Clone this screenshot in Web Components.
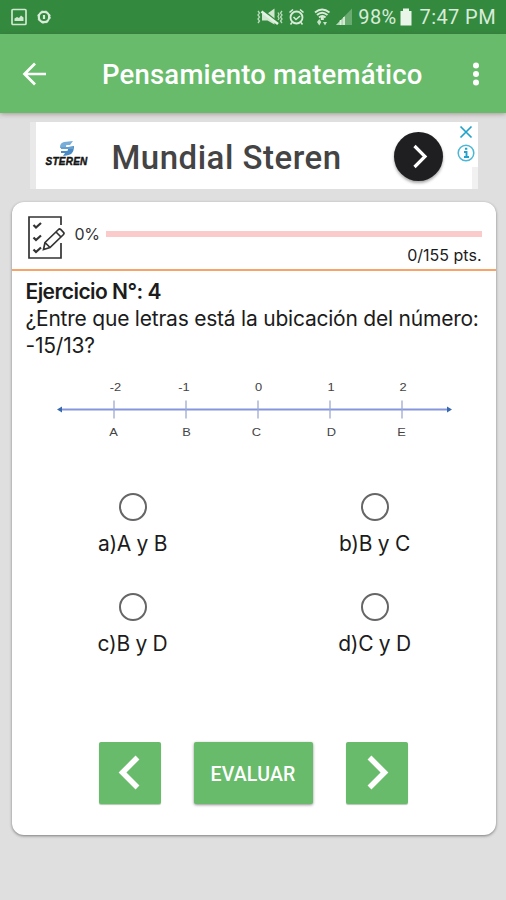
<!DOCTYPE html>
<html lang="es">
<head>
<meta charset="utf-8">
<meta name="viewport" content="width=device-width, initial-scale=1">
<title>Pensamiento matemático</title>
<style>
  html, body { margin: 0; height: 100%; }
  body {
    --green: #67bb6a;
    --green-dark: #338a3e;
    background: #dfdfdf;
    font-family: Inter, "Liberation Sans", sans-serif;
    color: #1c1c1c;
    overflow: hidden;
  }
</style>
</head>
<body>
<quiz-app>
  <status-bar slot="top" battery="98%" time="7:47 PM"></status-bar>
  <app-bar slot="top">Pensamiento matemático</app-bar>
  <ad-banner brand="STEREN">Mundial Steren</ad-banner>
  <quiz-card>
    <quiz-progress slot="header" percent="0" points="0/155 pts."></quiz-progress>
    <quiz-question heading="Ejercicio N°: 4">¿Entre que letras está la ubicación del número: -15/13?</quiz-question>
    <number-line></number-line>
    <answer-grid>
      <answer-option>a)A y B</answer-option>
      <answer-option>b)B y C</answer-option>
      <answer-option>c)B y D</answer-option>
      <answer-option>d)C y D</answer-option>
    </answer-grid>
    <quiz-button slot="actions" flat><svg width="62" height="62" viewBox="0 0 62 62"><path d="M38.500 15.500 23.500 30.500 38.500 45.500" fill="none" stroke="#fff" stroke-width="5.500"/></svg></quiz-button>
    <quiz-button slot="actions" wide>EVALUAR</quiz-button>
    <quiz-button slot="actions" flat><svg width="62" height="62" viewBox="0 0 62 62"><path d="M23.500 15.500 38.500 30.500 23.500 45.500" fill="none" stroke="#fff" stroke-width="5.500"/></svg></quiz-button>
  </quiz-card>
</quiz-app>

<script>
// screen layout: bars on top, content column below
class QuizApp extends HTMLElement {
  constructor() {
    super();
    this.attachShadow({ mode: 'open' });
    this.shadowRoot.innerHTML = `
      <style>
        :host { display: flex; flex-direction: column; height: 900px; width: 506px; }
        main { display: flex; flex-direction: column; align-items: center; gap: 13px; padding-top: 9px; }
      </style>
      <slot name="top"></slot>
      <main><slot></slot></main>
    `;
  }
}
customElements.define('quiz-app', QuizApp);

/*
android status bar
 - attributes: battery, time
 */
class StatusBar extends HTMLElement {
  constructor() {
    super();
    this.attachShadow({ mode: 'open' });
    this.shadowRoot.innerHTML = `
      <style>
        :host {
          display: flex;
          align-items: center;
          justify-content: space-between;
          box-sizing: border-box;
          height: 34px;
          padding: 0 10px 0 11px;
          background: var(--green-dark);
          color: #d9ecd9;
          font: 20px/36px Roboto, sans-serif;
        }
        div { display: flex; align-items: center; white-space: nowrap; }
        svg { display: block; flex: none; }
        .left { gap: 10px; }
        .battery { margin-left: 5px; letter-spacing: 0.4px; }
        .time { margin-left: 8px; letter-spacing: 0.4px; }
        .cell { margin-left: 3px; }
      </style>
      <div class="left">
        <svg width="16" height="18" viewBox="0 0 16 18"><rect x="1" y="1.500" width="14" height="15" rx="1" fill="none" stroke="#cfe8cf" stroke-width="1.700"/><path d="M3.500 13V10.500L6 9l2 1 2-2.500 2.500 2V13z" fill="#cfe8cf"/></svg>
        <svg width="16" height="18" viewBox="0 0 16 18"><circle cx="7" cy="9" r="5.200" fill="none" stroke="#d9ecd9" stroke-width="2.200"/><circle cx="7" cy="9" r="6.200" fill="none" stroke="#d9ecd9" stroke-width="1" stroke-dasharray="2 3"/><path d="M7 7v4" stroke="#d9ecd9" stroke-width="2.200"/></svg>
      </div>
      <div>
        <svg width="26" height="18" viewBox="0 0 26 18"><path d="M5 5.500H10.500l7-5v16L10.500 12.500H5z" fill="#cfe6cf"/><path d="M5.500 2 20.500 14" stroke="#338a3e" stroke-width="2"/><path d="M4.500 3.500 21 16" stroke="#e4f2e4" stroke-width="2.600"/><path d="M1 3l1.500 2L1 7l1.500 2L1 11l1.500 2L1 15M25 3l-1.500 2L25 7l-1.500 2L25 11l-1.500 2L25 15M21 4.500l1 2-1 2 1 2-1 1.500" fill="none" stroke="#b9dab9" stroke-width="1.300"/></svg>
        <svg width="17" height="18" viewBox="0 0 17 18" style="margin-left:5px"><circle cx="8.500" cy="9.500" r="6" fill="none" stroke="#d9ecd9" stroke-width="1.800"/><path d="M1.500 4.500 5 1.500M15.500 4.500 12 1.500M4 14.500 2.500 16.500M13 14.500l1.500 2M5.500 9l2.500 2.500 4-3.500" fill="none" stroke="#d9ecd9" stroke-width="1.600"/></svg>
        <svg width="17" height="18" viewBox="0 0 17 18" style="margin-left:9px"><path d="M1 4.500Q8 -1.500 15.500 4.500M3 7Q8 2.500 13.500 7M5 9.500Q8.500 6.500 11.500 9.500" fill="none" stroke="#d9ecd9" stroke-width="1.900"/><path d="M8.300 9v3" stroke="#d9ecd9" stroke-width="3"/><path d="m3 14 2.300-3 2 3-2 3.500zM9 14h4l-2 3.500z" fill="#c6e2c6"/></svg>
        <svg width="18" height="18" viewBox="0 0 18 18" style="margin-left:4px"><path d="M17 .5V17H1z" fill="#69ab70"/><path d="M10 8v9H1z" fill="#b5d7b7"/><path d="M5.500 12v5M9 9v8" stroke="#deefde" stroke-width="1.500"/></svg>
        <span class="battery"></span>
        <svg class="cell" width="12" height="18" viewBox="0 0 12 18"><path d="M3 .5h6V3h2.500v14.500H.5V3H3z" fill="#e9f5e9"/></svg>
        <span class="time"></span>
      </div>
    `;
    this.shadowRoot.querySelector('.battery').textContent = this.getAttribute('battery');
    this.shadowRoot.querySelector('.time').textContent = this.getAttribute('time');
  }
}
customElements.define('status-bar', StatusBar);

// toolbar with back arrow, title and overflow menu
class AppBar extends HTMLElement {
  constructor() {
    super();
    this.attachShadow({ mode: 'open' });
    this.shadowRoot.innerHTML = `
      <style>
        :host {
          display: flex;
          align-items: center;
          box-sizing: border-box;
          height: 79px;
          padding: 0 24px 0 22px;
          background: var(--green);
          color: #fff;
          box-shadow: 0 1px 5px rgba(90, 60, 60, 0.45);
        }
        h1 {
          flex: 1;
          margin: 2px 0 0 54px;
          font: 500 27.500px/34px Roboto, sans-serif;
          letter-spacing: 0.2px;
          white-space: nowrap;
        }
      </style>
      <svg width="26" height="26" viewBox="0 0 26 26"><path d="M24 13H3M13 2.500 2.500 13 13 23.500" fill="none" stroke="#fff" stroke-width="2.700"/></svg>
      <h1><slot></slot></h1>
      <svg width="12" height="26" viewBox="0 0 12 26" fill="#fff"><circle cx="6" cy="4.500" r="3"/><circle cx="6" cy="13" r="3"/><circle cx="6" cy="21.500" r="3"/></svg>
    `;
  }
}
customElements.define('app-bar', AppBar);

/*
advert strip
 - attributes: brand
 */
class AdBanner extends HTMLElement {
  constructor() {
    super();
    this.attachShadow({ mode: 'open' });
    this.shadowRoot.innerHTML = `
      <style>
        :host {
          display: flex;
          box-sizing: border-box;
          width: 448px;
          height: 67px;
          padding-left: 6px;
          margin-left: 1px;
          background: linear-gradient(90deg, #e9e9e9 6px, #fff 6px, #fff 442px, #f1f1f1 442px);
        }
        .brand { display: flex; flex-direction: column; align-items: center; width: 62px; padding-top: 19px; }
        .brand span { font: italic 700 10px/11px "Liberation Sans", sans-serif; color: #151515; -webkit-text-stroke: 0.4px #151515; letter-spacing: 0.25px; }
        b { flex: 1; padding-left: 14px; font: 500 33px/71px Roboto, sans-serif; color: #444; white-space: nowrap; letter-spacing: 0.5px; }
        .go {
          display: flex;
          width: 49px;
          height: 49px;
          margin: 10px 12px 0 0;
          border-radius: 50%;
          background: #1f1f21;
          box-shadow: 0 2px 3px rgba(0, 0, 0, 0.35);
        }
        .info { display: flex; flex-direction: column; align-items: center; gap: 5px; width: 23px; padding: 3px 0 0; background: #fff; height: 42px; }
      </style>
      <div class="brand">
        <svg width="16" height="15" viewBox="0 0 16 15"><path d="M14 0 5 1Q1 2 1 6v1h6V5q0-1 1-1h3z" fill="#78add8"/><path d="M15 5 9 6v3q0 1-2 1H2v2h4l-2 3q8-1 9-3 2-2 2-7z" fill="#4a8ac4"/><path d="M2 6h12v2H2z" fill="#659fce"/></svg>
        <span></span>
      </div>
      <b><slot></slot></b>
      <div class="go"><svg width="49" height="49" viewBox="0 0 49 49"><path d="M20.500 14 31 24.500 20.500 35" fill="none" stroke="#fff" stroke-width="3.200"/></svg></div>
      <div class="info">
        <svg width="14" height="14" viewBox="0 0 14 14"><path d="m1.500 1.500 11 11M12.500 1.500l-11 11" stroke="#20a3cb" stroke-width="1.700"/></svg>
        <svg width="18" height="18" viewBox="0 0 18 18"><circle cx="9" cy="9" r="7.800" fill="none" stroke="#4bb6d6" stroke-width="1.500"/><path d="M7 8h2.500v5M7 13h5M8 4.800h2.300" fill="none" stroke="#20a3cb" stroke-width="1.900"/></svg>
      </div>
    `;
    this.shadowRoot.querySelector('.brand span').textContent = this.getAttribute('brand');
  }
}
customElements.define('ad-banner', AdBanner);

/*
main card
 - slots: header, default, actions
 */
class QuizCard extends HTMLElement {
  constructor() {
    super();
    this.attachShadow({ mode: 'open' });
    this.shadowRoot.innerHTML = `
      <style>
        :host {
          display: flex;
          flex-direction: column;
          width: 484px;
          height: 633px;
          margin-left: 1px;
          border-radius: 12px;
          background: #fff;
          box-shadow: 0 1px 3px rgba(0, 0, 0, 0.45);
        }
        header { height: 67px; border-bottom: 2px solid #f8a469; }
        .body { flex: 1; }
        footer { display: flex; justify-content: center; gap: 33px; padding: 0 1px 31px 0; }
      </style>
      <header><slot name="header"></slot></header>
      <div class="body"><slot></slot></div>
      <footer><slot name="actions"></slot></footer>
    `;
  }
}
customElements.define('quiz-card', QuizCard);

/*
score row
 - attributes: percent, points
 */
class QuizProgress extends HTMLElement {
  constructor() {
    super();
    this.attachShadow({ mode: 'open' });
    const percent = Number(this.getAttribute('percent')) || 0;
    this.shadowRoot.innerHTML = `
      <style>
        :host { display: flex; padding: 13px 14px 0 15px; }
        .rows { flex: 1; padding-left: 10px; }
        .row { display: flex; align-items: center; height: 37px; }
        .percent { width: 31px; font-size: 16px; letter-spacing: -0.4px; color: #333; }
        .track { flex: 1; height: 6px; background: #fbcaca; }
        .fill { height: 100%; background: #e53935; }
        .points { text-align: right; font-size: 16px; line-height: 20px; margin-top: -7px; letter-spacing: 0; }
      </style>
      <svg width="38" height="44" viewBox="0 0 38 44" fill="none" stroke="#333" stroke-width="1.700"><path d="M34 10V2H2v41h32V28"/><path d="m6.500 10 2.500 2.500 5-4.500M6.500 22.500 9 25l5-4.500M6.500 34.500 9 37l5-4.500" stroke-width="2.200"/><path d="m18 27.500 13.500-13q1-1 2.200 0l2.800 2.800q1 1 0 2.200l-13.500 13-6.500 2zM18 27.500l5 5M29 17l5 5"/></svg>
      <div class="rows">
        <div class="row">
          <span class="percent">${percent}%</span>
          <div class="track"><div class="fill" style="width:${percent}%"></div></div>
        </div>
        <div class="points"></div>
      </div>
    `;
    this.shadowRoot.querySelector('.points').textContent = this.getAttribute('points');
  }
}
customElements.define('quiz-progress', QuizProgress);

class QuizQuestion extends HTMLElement {
  constructor() {
    super();
    this.attachShadow({ mode: 'open' });
    this.shadowRoot.innerHTML = `
      <style>
        :host { display: block; padding: 7px 10px 0 14px; font-size: 21px; line-height: 27px; letter-spacing: -0.22px; }
        h2 { margin: 0; font-size: 21px; font-weight: 600; letter-spacing: -0.55px; }
      </style>
      <h2></h2>
      <slot></slot>
    `;
    this.shadowRoot.querySelector('h2').textContent = this.getAttribute('heading');
  }
}
customElements.define('quiz-question', QuizQuestion);

// number line with integer marks above and letters below
class NumberLine extends HTMLElement {
  constructor() {
    super();
    this.attachShadow({ mode: 'open' });
    const marks = [
      { x: 102, label: '-2', lx: 103.5, letter: 'A', tx: 101.5 },
      { x: 174, label: '-1', lx: 172, letter: 'B', tx: 174.5 },
      { x: 246, label: '0', lx: 246.5, letter: 'C', tx: 244.5 },
      { x: 318, label: '1', lx: 319, letter: 'D', tx: 319.5 },
      { x: 390, label: '2', lx: 391, letter: 'E', tx: 389.5 },
    ];
    this.shadowRoot.innerHTML = `
      <style>
        :host { display: block; height: 80px; margin-top: 11px; }
        text { font: 11px "Liberation Sans", sans-serif; text-anchor: middle; fill: #444; }
      </style>
      <svg width="484" height="80" viewBox="0 0 484 80">
        <path d="M48 39.500H437" stroke="#8596dc" stroke-width="2"/>
        <path d="m45 39.500 5-3v6zM440 39.500l-5-3v6z" fill="#3769b0"/>
        ${marks.map((m) => `
          <path d="M${m.x} 30.500v18" stroke="#9daad2" stroke-width="1.300"/>
          <text transform="translate(${m.lx} 20.500) scale(1.170 1)">${m.label}</text>
          <text transform="translate(${m.tx} 65.500) scale(1.170 1)">${m.letter}</text>
        `).join('')}
      </svg>
    `;
  }
}
customElements.define('number-line', NumberLine);

class AnswerGrid extends HTMLElement {
  constructor() {
    super();
    this.attachShadow({ mode: 'open' });
    this.shadowRoot.innerHTML = `
      <style>
        :host { display: grid; grid-template-columns: 1fr 1fr; grid-auto-rows: 100px; padding-top: 43px; }
      </style>
      <slot></slot>
    `;
  }
}
customElements.define('answer-grid', AnswerGrid);

class AnswerOption extends HTMLElement {
  constructor() {
    super();
    this.attachShadow({ mode: 'open' });
    this.shadowRoot.innerHTML = `
      <style>
        :host { display: flex; flex-direction: column; align-items: center; gap: 9px; font-size: 21px; line-height: 28px; letter-spacing: -0.3px; }
        .radio { box-sizing: border-box; width: 28px; height: 28px; border: 2px solid #666; border-radius: 50%; }
      </style>
      <div class="radio" role="radio" aria-checked="false"></div>
      <span><slot></slot></span>
    `;
  }
}
customElements.define('answer-option', AnswerOption);

/*
raised button
 - attributes: wide, flat
 */
class QuizButton extends HTMLElement {
  constructor() {
    super();
    this.attachShadow({ mode: 'open' });
    this.shadowRoot.innerHTML = `
      <style>
        :host { display: block; width: 62px; height: 62px; }
        :host([wide]) { width: 119px; }
        button {
          display: flex;
          align-items: center;
          justify-content: center;
          width: 100%;
          height: 100%;
          padding: 2px 0 0;
          border: none;
          border-radius: 2px;
          background: var(--green);
          box-shadow: 0 1px 3px rgba(0, 0, 0, 0.45);
          color: #fff;
          font: 500 19.500px Roboto, sans-serif;
          letter-spacing: 0.2px;
        }
        :host([flat]) button { padding: 0; box-shadow: 0 1px 1px rgba(60, 110, 60, 0.4); }
      </style>
      <button><slot></slot></button>
    `;
  }
}
customElements.define('quiz-button', QuizButton);
</script>
</body>
</html>
